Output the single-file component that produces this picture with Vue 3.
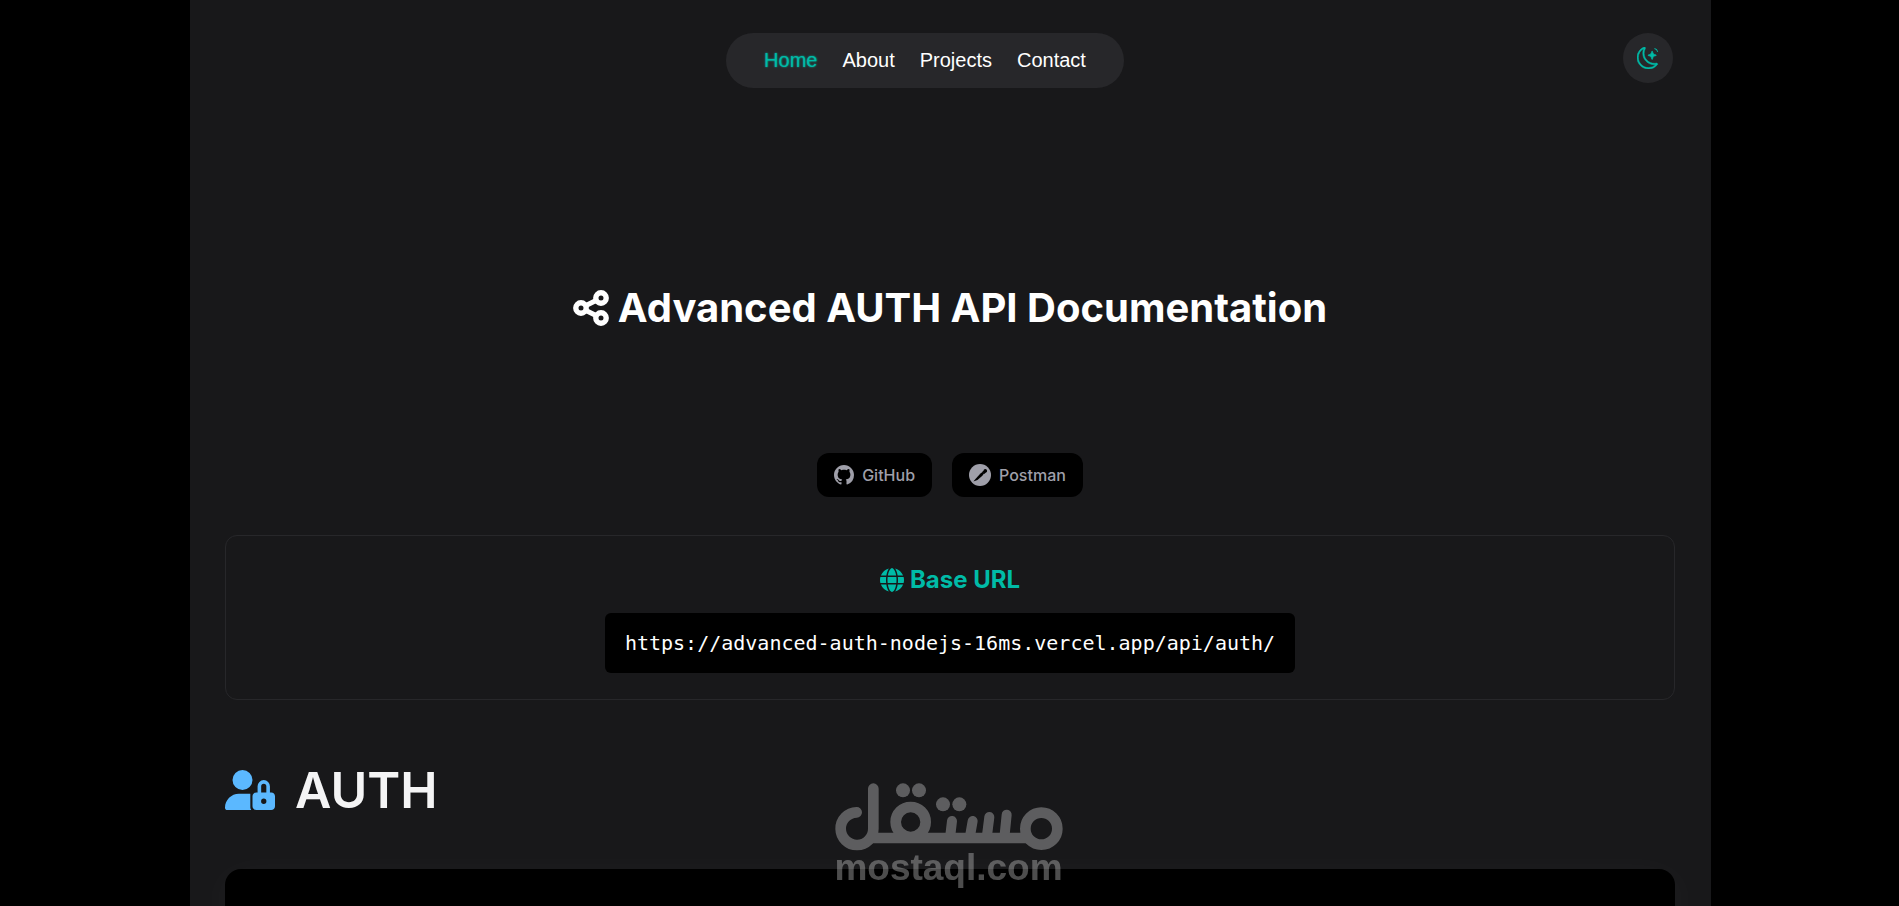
<template>
  <div class="page">
    <header class="header">
      <nav class="nav">
        <a
          v-for="link in links"
          :key="link"
          href="#"
          class="nav-link"
          :class="{ active: link === activeLink }"
          @click.prevent="activeLink = link"
        >{{ link }}</a>
      </nav>
      <button type="button" class="theme-btn" aria-label="Toggle theme">
        <svg class="theme-icon" viewBox="0 0 16 16" fill="currentColor">
          <path stroke="currentColor" stroke-width="0.35" d="M6 .278a.77.77 0 0 1 .08.858 7.2 7.2 0 0 0-.878 3.46c0 4.021 3.278 7.277 7.318 7.277q.792-.001 1.533-.16a.79.79 0 0 1 .81.316.73.73 0 0 1-.031.893A8.35 8.35 0 0 1 8.344 16C3.734 16 0 12.286 0 7.71 0 4.266 2.114 1.312 5.124.06A.75.75 0 0 1 6 .278M4.858 1.311A7.27 7.27 0 0 0 1.025 7.71c0 4.02 3.279 7.276 7.319 7.276a7.32 7.32 0 0 0 5.205-2.162q-.506.063-1.029.063c-4.61 0-8.343-3.714-8.343-8.29 0-1.167.242-2.278.681-3.286" />
          <path stroke="currentColor" stroke-width="0.5" d="M10.794 3.148a.217.217 0 0 1 .412 0l.387 1.162c.173.518.579.924 1.097 1.097l1.162.387a.217.217 0 0 1 0 .412l-1.162.387a1.73 1.73 0 0 0-1.097 1.097l-.387 1.162a.217.217 0 0 1-.412 0l-.387-1.162A1.73 1.73 0 0 0 9.31 6.593l-1.162-.387a.217.217 0 0 1 0-.412l1.162-.387a1.73 1.73 0 0 0 1.097-1.097z" />
          <path d="M12.6 1.4q1.7.3 2.2 2.3l.6-.3q-.5-2-2.6-2.6z" />
        </svg>
      </button>
    </header>

    <h1 class="title">
      <svg class="title-icon" viewBox="0 0 36 36" fill="none" stroke="currentColor">
        <path d="M8 18 28 8M8 18l20 10" stroke-width="5" />
        <circle class="node" cx="8" cy="18" r="5.2" stroke-width="5.4" />
        <circle class="node" cx="28" cy="8" r="5.2" stroke-width="5.4" />
        <circle class="node" cx="28" cy="28" r="5.2" stroke-width="5.4" />
      </svg>
      Advanced AUTH API Documentation
    </h1>

    <div class="actions">
      <a href="#" class="action">
        <svg class="github-icon" viewBox="0 0 16 16" fill="currentColor">
          <path d="M8 0C3.58 0 0 3.58 0 8c0 3.54 2.29 6.53 5.47 7.59.4.07.55-.17.55-.38 0-.19-.01-.82-.01-1.49-2.01.37-2.53-.49-2.69-.94-.09-.23-.48-.94-.82-1.13-.28-.15-.68-.52-.01-.53.63-.01 1.08.58 1.23.82.72 1.21 1.87.87 2.33.66.07-.52.28-.87.51-1.07-1.78-.2-3.64-.89-3.64-3.95 0-.87.31-1.59.82-2.15-.08-.2-.36-1.02.08-2.12 0 0 .67-.21 2.2.82.64-.18 1.32-.27 2-.27s1.36.09 2 .27c1.53-1.04 2.2-.82 2.2-.82.44 1.1.16 1.92.08 2.12.51.56.82 1.27.82 2.15 0 3.07-1.87 3.75-3.65 3.95.29.25.54.73.54 1.48 0 1.07-.01 1.93-.01 2.2 0 .21.15.46.55.38A8.01 8.01 0 0 0 16 8c0-4.42-3.58-8-8-8" />
        </svg>
        GitHub
      </a>
      <a href="#" class="action">
        <svg class="postman-icon" viewBox="0 0 24 24">
          <circle cx="12" cy="12" r="12" fill="currentColor" />
          <path d="m4.8 19.2 2-2.7 5.7-6.2 2.6-1.8 1.4 1.7-1.9 2.6-5.4 4.6z" fill="#000" />
          <path d="m14.6 8.5 1.2-1.1a2 2 0 1 1 2.4 2.1l-1.6 1.3z" fill="#000" />
        </svg>
        Postman
      </a>
    </div>

    <section class="base-url">
      <h2 class="base-title">
        <svg class="globe-icon" viewBox="0 0 512 512" fill="currentColor">
          <path d="M352 256c0 22.2-1.2 43.6-3.3 64H163.3c-2.2-20.4-3.3-41.8-3.3-64s1.2-43.6 3.3-64H348.7c2.2 20.4 3.3 41.8 3.3 64zm28.8-64H503.9c5.3 20.5 8.1 41.9 8.1 64s-2.8 43.5-8.1 64H380.8c2.1-20.6 3.2-42 3.2-64s-1.1-43.4-3.2-64zm112.6-32H376.7c-10-63.9-29.8-117.4-55.3-151.6c78.3 20.7 142 77.5 171.9 151.6zm-149.1 0H167.7c6.1-36.4 15.5-68.6 27-94.7c10.5-23.6 22.2-40.7 33.5-51.5C239.4 3.2 248.7 0 256 0s16.6 3.2 27.8 13.8c11.3 10.8 23 27.9 33.5 51.5c11.6 26 20.9 58.2 27 94.7zm-209 0H18.6C48.6 85.9 112.2 29.1 190.6 8.4C165.1 42.6 145.3 96.1 135.3 160zM8.1 192H131.2c-2.1 20.6-3.2 42-3.2 64s1.1 43.4 3.2 64H8.1C2.8 299.5 0 278.1 0 256s2.8-43.5 8.1-64zM194.7 446.6c-11.6-26-20.9-58.2-27-94.6H344.3c-6.1 36.4-15.5 68.6-27 94.6c-10.5 23.6-22.2 40.7-33.5 51.5C272.6 508.8 263.3 512 256 512s-16.6-3.2-27.8-13.8c-11.3-10.8-23-27.9-33.5-51.5zM135.3 352c10 63.9 29.8 117.4 55.3 151.6C112.2 482.9 48.6 426.1 18.6 352H135.3zm358.1 0c-30 74.1-93.6 130.9-171.9 151.6c25.5-34.2 45.2-87.7 55.3-151.6H493.4z" />
        </svg>
        Base URL
      </h2>
      <code class="url">{{ baseUrl }}</code>
    </section>

    <h2 class="section-title">
      <svg class="lock-icon" viewBox="0 0 640 512" fill="currentColor">
        <path d="M224 256A128 128 0 1 0 224 0a128 128 0 1 0 0 256zm-45.7 48C79.8 304 0 383.8 0 482.3C0 498.7 13.3 512 29.7 512H336c-8-9.4-12-20.3-12-32V304H178.3z" />
        <path d="M440 300V208a56 56 0 0 1 112 0v92" fill="none" stroke="currentColor" stroke-width="46" />
        <path fill-rule="evenodd" d="M400 288H592c26.5 0 48 21.5 48 48V464c0 26.5-21.5 48-48 48H400c-26.5 0-48-21.5-48-48V336c0-26.5 21.5-48 48-48zM496 366a34 34 0 1 0 0 68 34 34 0 1 0 0-68z" />
      </svg>
      AUTH
    </h2>

    <section class="endpoints"></section>

    <!-- 水印 -->
    <div class="watermark">
      <svg class="watermark-logo" viewBox="45 38 684 204" fill="none" stroke="currentColor" stroke-width="32" stroke-linecap="round" role="img" aria-label="مستقل">
        <path d="M160 55V175A49 49 0 1 1 110 126" />
        <path d="M146 203H628" stroke-linecap="butt" />
        <circle cx="272" cy="155" r="45" />
        <circle cx="664" cy="175" r="48" />
        <path d="m560 133-7 70M508 140l-8 63M458 152l-9 51M396 152l-6 51" stroke-width="30" />
        <g fill="currentColor" stroke="none">
          <circle cx="249" cy="60" r="21" />
          <circle cx="297" cy="60" r="21" />
          <circle cx="369" cy="102" r="21" />
          <circle cx="418" cy="102" r="21" />
        </g>
      </svg>
      <span class="watermark-text">mostaql.com</span>
    </div>
  </div>
</template>

<script setup>
import { ref } from 'vue'

const links = ['Home', 'About', 'Projects', 'Contact']
const activeLink = ref('Home')
const baseUrl = 'https://advanced-auth-nodejs-16ms.vercel.app/api/auth/'
</script>

<style>
body {
  background: #000;
}
</style>

<style scoped>
.page {
  display: flex;
  flex-direction: column;
  box-sizing: border-box;
  min-height: 100vh;
  margin: 0 188px 0 190px;
  padding: 33px 36px 0 35px;
  background: #18181a;
  color: #fff;
  font-family: Inter, sans-serif;
}

.header {
  display: flex;
  align-items: flex-start;
  padding: 0 2px;
}

.nav {
  display: flex;
  gap: 25px;
  margin: 0 auto;
  padding: 16px 38px;
  border-radius: 28px;
  background: #27272a;
}

.nav-link {
  color: #fff;
  font-family: "Liberation Sans", Arial, sans-serif;
  font-size: 20px;
  line-height: 23px;
  text-decoration: none;
}

.nav-link.active {
  color: #00bba7;
  text-shadow: 0 0 2px #00bba7;
}

.theme-btn {
  display: flex;
  align-items: center;
  justify-content: center;
  width: 50px;
  height: 50px;
  padding: 0;
  border: none;
  border-radius: 50%;
  background: #27272a;
  color: #00bba7;
  cursor: pointer;
}

.theme-icon {
  width: 22px;
  height: 22px;
}

.title {
  display: flex;
  align-items: center;
  justify-content: center;
  gap: 9px;
  margin: 190px 0 115px;
  font-size: 40px;
  font-weight: 700;
  line-height: 60px;
}

.title-icon {
  width: 36px;
  height: 36px;
}

.node {
  fill: #18181a;
}

.actions {
  display: flex;
  justify-content: center;
  gap: 20px;
}

.action {
  display: flex;
  align-items: center;
  gap: 8px;
  height: 44px;
  padding: 0 17px;
  border-radius: 12px;
  background: #000;
  color: #9f9fa9;
  font-size: 16px;
  font-weight: 500;
  text-decoration: none;
}

.github-icon {
  width: 20px;
  height: 20px;
}

.postman-icon {
  width: 22px;
  height: 22px;
}

.base-url {
  display: flex;
  flex-direction: column;
  align-items: center;
  gap: 15px;
  margin-top: 38px;
  padding: 26px 0;
  border: 1px solid #27272a;
  border-radius: 12px;
}

.base-title {
  display: flex;
  align-items: center;
  gap: 6px;
  margin: 0;
  color: #00bba7;
  font-size: 24px;
  font-weight: 700;
  line-height: 36px;
}

.globe-icon {
  width: 24px;
  height: 24px;
}

.url {
  padding: 0 20px;
  border-radius: 6px;
  background: #000;
  font-family: "DejaVu Sans Mono", monospace;
  font-size: 20px;
  line-height: 60px;
}

.section-title {
  display: flex;
  align-items: center;
  gap: 20px;
  margin: 60px 0 49px;
  color: #f4f4f5;
  font-size: 50px;
  font-weight: 600;
  line-height: 60px;
}

.lock-icon {
  width: 50px;
  height: 40px;
  color: #5bb8ff;
}

.endpoints {
  flex: 1;
  min-height: 37px;
  border-radius: 16px 16px 0 0;
  background: #000;
  box-shadow: 0 10px 40px rgba(255, 255, 255, 0.05);
}

.watermark {
  position: fixed;
  right: 2px;
  bottom: 22px;
  left: 0;
  display: flex;
  flex-direction: column;
  align-items: center;
  color: #fff;
  opacity: 0.3;
  pointer-events: none;
}

.watermark-logo {
  width: 228px;
  height: 68px;
}

.watermark-text {
  font-family: "Liberation Sans", Arial, sans-serif;
  font-size: 37px;
  font-weight: 700;
  line-height: 33px;
}
</style>
